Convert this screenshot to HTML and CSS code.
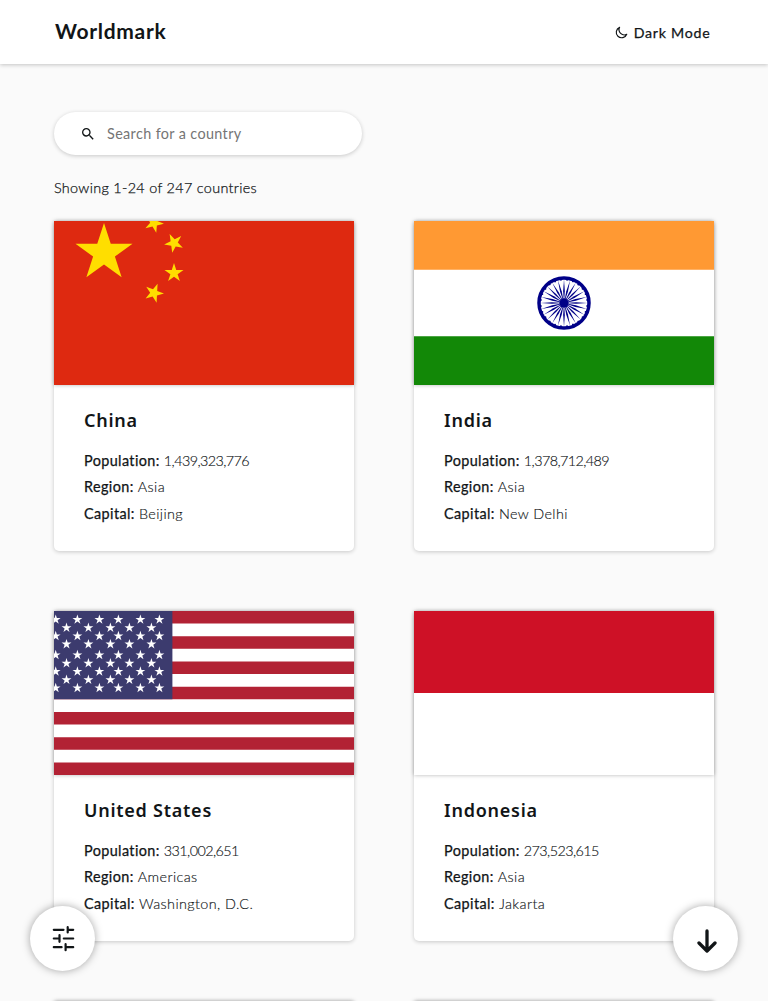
FILE: index.html
```html
<!DOCTYPE html>
<html lang="en">
<head>
<meta charset="utf-8">
<title>Worldmark</title>
<link rel="stylesheet" href="styles.css">
</head>
<body>
<svg class="defs" aria-hidden="true">
  <defs>
    <path id="star" d="M0-1 .2245-.309 .951-.309 .3633.118 .5878.809 0 .382-.5878.809-.3633.118-.951-.309-.2245-.309Z"/>
    <g id="row-a" fill="#fff">
      <use href="#star" transform="translate(1.7) scale(5.2)"/><use href="#star" transform="translate(23.4) scale(5.2)"/><use href="#star" transform="translate(45.4) scale(5.2)"/><use href="#star" transform="translate(64.4) scale(5.2)"/><use href="#star" transform="translate(86.4) scale(5.2)"/><use href="#star" transform="translate(105.4) scale(5.2)"/>
    </g>
    <g id="row-b" fill="#fff">
      <use href="#star" transform="translate(12.5) scale(5.2)"/><use href="#star" transform="translate(34.4) scale(5.2)"/><use href="#star" transform="translate(56.4) scale(5.2)"/><use href="#star" transform="translate(75.4) scale(5.2)"/><use href="#star" transform="translate(97.4) scale(5.2)"/>
    </g>
    <g id="spoke"><path d="M0 0-.85-12 0-23.5.85-12Z"/><circle cx="3.05" cy="-23.2" r=".95"/></g>
    <g id="spokes6"><use href="#spoke"/><use href="#spoke" transform="rotate(15)"/><use href="#spoke" transform="rotate(30)"/><use href="#spoke" transform="rotate(45)"/><use href="#spoke" transform="rotate(60)"/><use href="#spoke" transform="rotate(75)"/></g>
  </defs>
</svg>
<div class="app">
  <header class="header">
    <h1 class="logo">Worldmark</h1>
    <button class="theme"><svg class="moon" viewBox="0 0 24 24"><path d="M8.5 2.5A10 10 0 1 0 21.7 15.2 9.6 9.6 0 0 1 8.5 2.5Z"/></svg><span>Dark Mode</span></button>
  </header>
  <main class="main">
    <label class="search">
      <svg class="search-icon" viewBox="0 0 24 24"><path d="M15.5 14h-.79l-.28-.27A6.47 6.47 0 0 0 16 9.5 6.5 6.5 0 1 0 9.5 16c1.61 0 3.09-.59 4.23-1.57l.27.28v.79l5 4.99L20.49 19l-4.99-5zm-6 0C7.01 14 5 11.99 5 9.5S7.01 5 9.5 5 14 7.01 14 9.5 11.99 14 9.5 14z"/></svg>
      <input class="search-input" placeholder="Search for a country">
    </label>
    <p class="count">Showing 1-24 of 247 countries</p>
    <section class="grid">
      <article class="card">
        <svg class="flag" viewBox="0 0 300 164"><path fill="#de2910" d="M0 0h300v164H0z"/>
          <g fill="#ffde00"><use href="#star" transform="translate(50 32) scale(30)"/><use href="#star" transform="translate(100 2) rotate(23) scale(10)"/><use href="#star" transform="translate(120 22) rotate(46) scale(10)"/><use href="#star" transform="translate(120 52) scale(10)"/><use href="#star" transform="translate(100 72) rotate(21) scale(10)"/></g></svg>
        <div class="info"><h2 class="name">China</h2><p class="fact"><b>Population:</b> <span class="num">1,439,323,776</span></p><p class="fact"><b>Region:</b> <span>Asia</span></p><p class="fact"><b>Capital:</b> <span>Beijing</span></p></div>
      </article>
      <article class="card">
        <svg class="flag" viewBox="0 0 300 164"><path fill="#fff" d="M0 0h300v164H0z"/><path fill="#f93" d="M0 0h300v48.67H0z"/><path fill="#128807" d="M0 115.33h300V164H0z"/>
          <g transform="translate(150 82)" fill="#008"><circle r="25" fill="none" stroke="#008" stroke-width="3.5"/><circle r="4.7"/><use href="#spokes6"/><use href="#spokes6" transform="rotate(90)"/><use href="#spokes6" transform="rotate(180)"/><use href="#spokes6" transform="rotate(270)"/></g></svg>
        <div class="info"><h2 class="name">India</h2><p class="fact"><b>Population:</b> <span class="num">1,378,712,489</span></p><p class="fact"><b>Region:</b> <span>Asia</span></p><p class="fact"><b>Capital:</b> <span>New Delhi</span></p></div>
      </article>
      <article class="card">
        <svg class="flag" viewBox="0 0 300 164"><path fill="#fff" d="M0 0h300v164H0z"/><path stroke="#b22234" stroke-width="12.615" d="M0 6.31h300M0 31.54h300M0 56.77h300M0 82h300M0 107.23h300M0 132.46h300M0 157.69h300"/><path fill="#3c3b6e" d="M0 0h118.4v88.3H0z"/>
          <use href="#row-a" y="8.6"/><use href="#row-b" y="16.8"/><use href="#row-a" y="25"/><use href="#row-b" y="33.2"/><use href="#row-a" y="44"/><use href="#row-b" y="52.3"/><use href="#row-a" y="60.5"/><use href="#row-b" y="68.8"/><use href="#row-a" y="77"/></svg>
        <div class="info"><h2 class="name">United States</h2><p class="fact"><b>Population:</b> <span class="num">331,002,651</span></p><p class="fact"><b>Region:</b> <span>Americas</span></p><p class="fact"><b>Capital:</b> <span>Washington, D.C.</span></p></div>
      </article>
      <article class="card">
        <svg class="flag" viewBox="0 0 300 164"><path fill="#fff" d="M0 0h300v164H0z"/><path fill="#ce1126" d="M0 0h300v82H0z"/></svg>
        <div class="info"><h2 class="name">Indonesia</h2><p class="fact"><b>Population:</b> <span class="num">273,523,615</span></p><p class="fact"><b>Region:</b> <span>Asia</span></p><p class="fact"><b>Capital:</b> <span>Jakarta</span></p></div>
      </article>
      <article class="card"><svg class="flag" viewBox="0 0 300 164"></svg></article>
      <article class="card"><svg class="flag" viewBox="0 0 300 164"></svg></article>
    </section>
  </main>
  <button class="fab fab-left" aria-label="Filters"><svg class="tune" viewBox="0 0 24 26"><path d="M2.8 3.8h9.7M16.7 3.8h5.5M16.7 1.2v5.2M2.8 12.5h5.5M8.5 9.2v6.6M12.8 12.5h9.4M2.8 21.2h7.8M14.6 21.2h7.6M14.6 18.2v6"/></svg></button>
  <button class="fab fab-right" aria-label="Scroll down"><svg class="arrow" viewBox="0 0 24 24"><path d="M12 2v20M4 14l8 8 8-8"/></svg></button>
</div>
</body>
</html>
```
FILE: styles.css
```css
* { box-sizing: border-box; margin: 0; padding: 0; }
body { background: #fafafa; color: #111517; font-family: Lato, "Open Sans", sans-serif; }
button { border: 0; background: none; color: inherit; font: inherit; }
.defs { position: absolute; width: 0; height: 0; }
.app { height: 1001px; overflow: hidden; }
.header { height: 64px; padding: 0 57.5px 0 55px; display: flex; align-items: center; justify-content: space-between; background: #fff; box-shadow: 0 1px 4px rgba(0,0,0,.22); }
.logo { padding-bottom: 2px; font-size: 21px; line-height: 28px; font-weight: 700; letter-spacing: .7px; }
.theme { display: flex; align-items: center; gap: 6px; font-size: 14.2px; letter-spacing: .75px; -webkit-text-stroke: .25px currentColor; }
.moon { width: 13px; height: 13px; fill: none; stroke: currentColor; stroke-width: 2.1; stroke-linejoin: round; }
.main { padding: 48px 54px 0; }
.search { display: flex; align-items: center; width: 308px; height: 43px; padding-left: 26px; border-radius: 22px; background: #fff; box-shadow: 0 1px 4px rgba(0,0,0,.2); }
.search-icon { width: 16px; height: 16px; margin-right: 11px; fill: currentColor; }
.search-input { width: 220px; border: 0; outline: 0; background: none; font: 14.4px Lato, sans-serif; letter-spacing: .37px; }
.search-input::placeholder { color: #757575; }
.count { margin-top: 23px; font-size: 14.4px; font-weight: 300; line-height: 20px; letter-spacing: .32px; -webkit-text-stroke: .25px currentColor; }
.grid { display: grid; grid-template-columns: 300px 300px; gap: 60px; margin-top: 23px; }
.card { height: 330px; border-radius: 5px; background: #fff; box-shadow: 0 1px 4px rgba(0,0,0,.2); }
.flag { display: block; width: 300px; height: 164px; box-shadow: 0 0 4px rgba(0,0,0,.3); }
.info { padding: 21px 30px; }
.name { margin-bottom: 14px; font: 600 18px/28px "Noto Sans", sans-serif; letter-spacing: .75px; }
.fact { height: 26.4px; font-size: 14.4px; line-height: 26px; letter-spacing: .4px; white-space: nowrap; }
.fact b { font-weight: 400; letter-spacing: .4px; -webkit-text-stroke: .25px currentColor; }
.fact span { font-weight: 300; -webkit-text-stroke: .15px currentColor; }
.fact .num { letter-spacing: -.6px; }
.fab { position: absolute; top: 906px; display: flex; align-items: center; justify-content: center; width: 65px; height: 65px; border-radius: 50%; background: #fff; box-shadow: 0 0 8px rgba(0,0,0,.35); }
.fab svg { fill: none; stroke: currentColor; stroke-linecap: round; stroke-linejoin: round; }
.fab-left { left: 30px; }
.fab-right { left: 673px; }
.tune { width: 24px; height: 26px; stroke-width: 2.2; }
.arrow { width: 24px; height: 24px; stroke-width: 3.3; margin: 4px 0 0 2px; }
```
